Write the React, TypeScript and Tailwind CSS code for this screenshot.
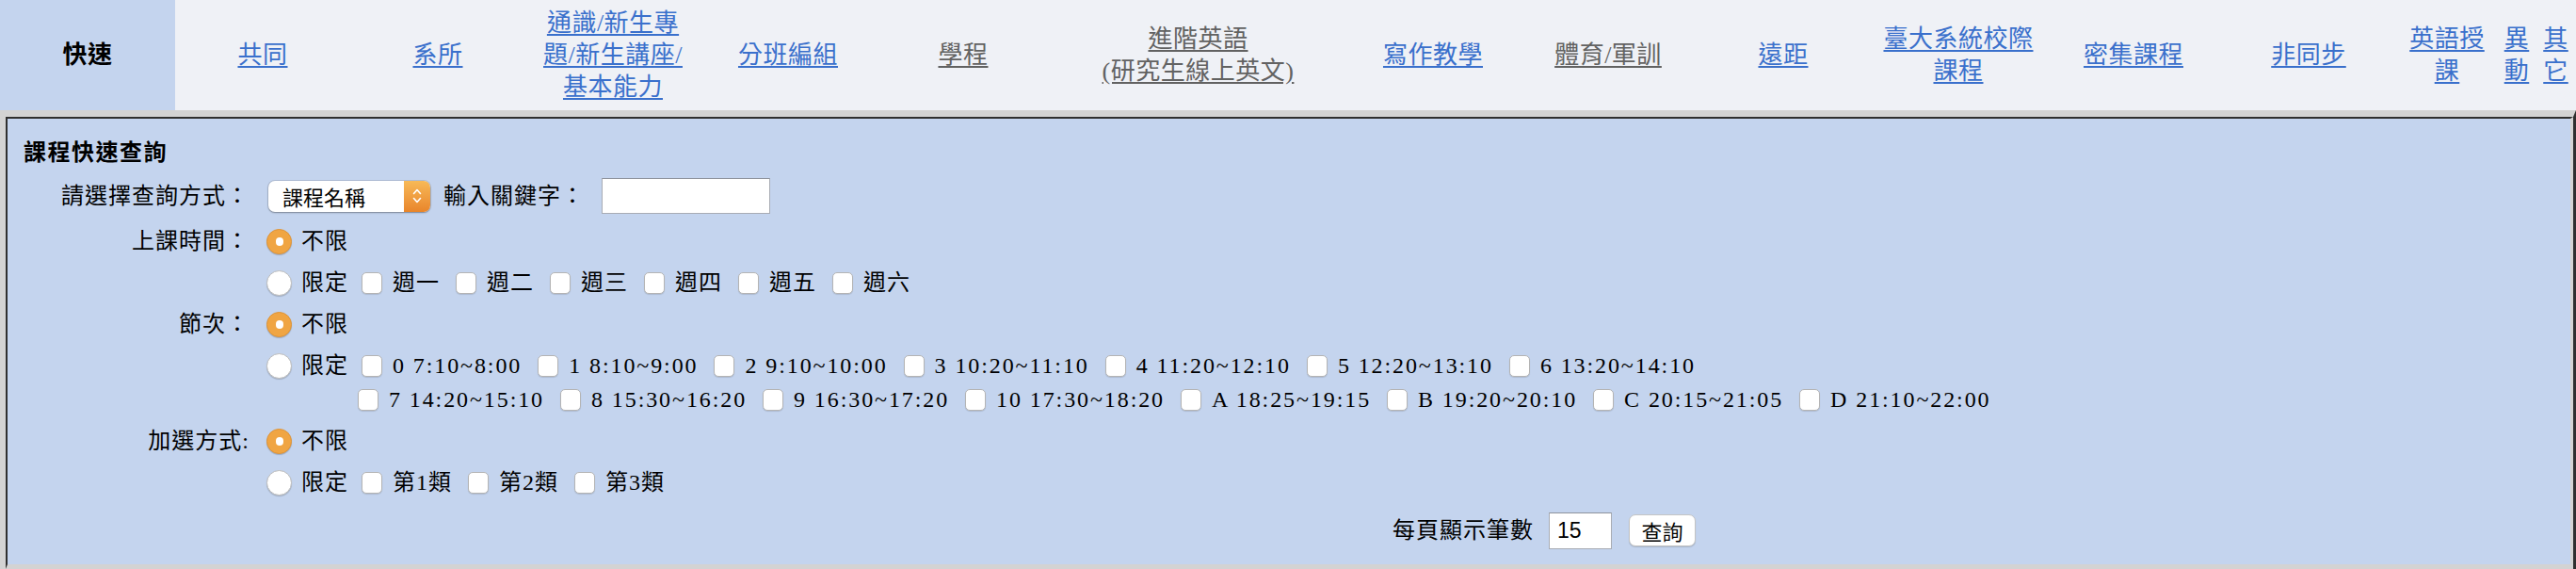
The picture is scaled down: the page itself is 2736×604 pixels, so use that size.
import React from "react";

type Tab = { w: string; lines: string[]; kind: "active" | "link" | "gray" };

const tabs: Tab[] = [
  { w: "w-[186px]", lines: ["快速"], kind: "active" },
  { w: "w-[186px]", lines: ["共同"], kind: "link" },
  { w: "w-[186px]", lines: ["系所"], kind: "link" },
  { w: "w-[186px]", lines: ["通識/新生專", "題/新生講座/", "基本能力"], kind: "link" },
  { w: "w-[186px]", lines: ["分班編組"], kind: "link" },
  { w: "w-[186px]", lines: ["學程"], kind: "gray" },
  { w: "w-[313px]", lines: ["進階英語", "(研究生線上英文)"], kind: "gray" },
  { w: "w-[186px]", lines: ["寫作教學"], kind: "link" },
  { w: "w-[186px]", lines: ["體育/軍訓"], kind: "gray" },
  { w: "w-[186px]", lines: ["遠距"], kind: "link" },
  { w: "w-[186px]", lines: ["臺大系統校際", "課程"], kind: "link" },
  { w: "w-[186px]", lines: ["密集課程"], kind: "link" },
  { w: "w-[186px]", lines: ["非同步"], kind: "link" },
  { w: "w-[108px]", lines: ["英語授", "課"], kind: "link" },
  { w: "w-[40px]", lines: ["異", "動"], kind: "link" },
  { w: "w-[43px]", lines: ["其", "它"], kind: "link" },
];

function TabBar() {
  return (
    <div className="flex h-[117px] bg-[#eff1f6] text-[26px] leading-[34px] tracking-[0.5px]">
      {tabs.map((t, i) => (
        <div
          key={i}
          className={`${t.w} flex shrink-0 items-center justify-center text-center ${
            t.kind === "active" ? "bg-[#c4d4ee]" : ""
          }`}
        >
          {t.kind === "active" ? (
            <span className="font-bold text-black">{t.lines[0]}</span>
          ) : (
            <a
              href="#"
              className={`whitespace-nowrap underline underline-offset-[3px] ${
                t.kind === "gray" ? "text-[#626262]" : "text-[#3a70cc]"
              }`}
            >
              {t.lines.map((l, j) => (
                <React.Fragment key={j}>
                  {j > 0 && <br />}
                  {l}
                </React.Fragment>
              ))}
            </a>
          )}
        </div>
      ))}
    </div>
  );
}

function Radio({ checked }: { checked?: boolean }) {
  return checked ? (
    <span className="flex h-[27px] w-[27px] shrink-0 items-center justify-center rounded-full border border-[#e19434] bg-[#f0a543] shadow-[0_1px_1px_rgba(0,0,0,0.2)]">
      <span className="h-[9px] w-[8px] rounded-full bg-white" />
    </span>
  ) : (
    <span className="h-[27px] w-[27px] shrink-0 rounded-full border border-[#bdbdbd] bg-white shadow-[0_1px_1px_rgba(0,0,0,0.18)]" />
  );
}

function Checkbox() {
  return (
    <span className="h-[23px] w-[22px] shrink-0 rounded-[5px] border border-[#b4b4b4] bg-white shadow-[0_1px_1px_rgba(0,0,0,0.12)]" />
  );
}

function Opt({ label, wide }: { label: string; wide?: boolean }) {
  return (
    <span className="flex items-center gap-[11px]">
      <Checkbox />
      <span className={wide ? "tracking-[1.9px]" : ""}>{label}</span>
    </span>
  );
}

function Row({
  h,
  label,
  children,
}: {
  h: string;
  label?: string;
  children?: React.ReactNode;
}) {
  return (
    <div className={`flex items-center ${h}`}>
      <div className="w-[257px] shrink-0 text-right">{label}</div>
      <div className="ml-[18px] flex items-center">{children}</div>
    </div>
  );
}

function Unlimited() {
  return (
    <div className="flex items-center gap-[10px]">
      <Radio checked />
      <span>不限</span>
    </div>
  );
}

function Limited({ children }: { children?: React.ReactNode }) {
  return (
    <div className="flex items-center">
      <Radio />
      <span className="ml-[10px]">限定</span>
      <div className="ml-[10px] flex items-center gap-[17px] pl-[4px]">{children}</div>
    </div>
  );
}

const periods1 = [
  "0 7:10~8:00",
  "1 8:10~9:00",
  "2 9:10~10:00",
  "3 10:20~11:10",
  "4 11:20~12:10",
  "5 12:20~13:10",
  "6 13:20~14:10",
];
const periods2 = [
  "7 14:20~15:10",
  "8 15:30~16:20",
  "9 16:30~17:20",
  "10 17:30~18:20",
  "A 18:25~19:15",
  "B 19:20~20:10",
  "C 20:15~21:05",
  "D 21:10~22:00",
];

function Chevrons() {
  return (
    <svg width="12" height="20" viewBox="0 0 12 20" fill="none">
      <path d="M2.5 7.5 L6 3.5 L9.5 7.5" stroke="white" strokeWidth="1.6" strokeLinecap="round" strokeLinejoin="round" />
      <path d="M2.5 12.5 L6 16.5 L9.5 12.5" stroke="white" strokeWidth="1.6" strokeLinecap="round" strokeLinejoin="round" />
    </svg>
  );
}

export default function App() {
  return (
    <div className="h-[604px] w-[2736px] overflow-hidden bg-white font-['Liberation_Serif','Noto_Sans_CJK_TC',serif] text-black">
      <TabBar />
      <div className="border-t-[7px] border-r-[3px] border-l-[6px] border-t-[#d3d3d3] border-r-[#2f2f2f] border-l-[#d3d3d3]">
        <div className="flex h-[480px] flex-col border-t-2 border-r-[3px] border-b-[5px] border-l-2 border-t-[#2f2f2f] border-r-[#d3d3d3] border-b-[#d3d3d3] border-l-[#2f2f2f] bg-[#c4d4ee] pt-[15px] text-[24px] tracking-[1px]">
          <div className="flex h-[42px] items-center pl-[17px] font-bold tracking-[1.5px]">課程快速查詢</div>

          <Row h="h-[50px]" label="請選擇查詢方式：">
            <div className="ml-[2px] flex h-[33px] w-[172px] overflow-hidden rounded-[7px] bg-white shadow-[0_0_0_1px_rgba(0,0,0,0.1),0_1px_2px_rgba(0,0,0,0.3)]">
              <div className="flex flex-1 items-center pl-[15px] font-['Noto_Sans_CJK_TC',sans-serif] text-[22px] tracking-normal">
                課程名稱
              </div>
              <div className="flex w-[28px] items-center justify-center bg-linear-to-b from-[#f7b957] to-[#e8852a]">
                <Chevrons />
              </div>
            </div>
            <span className="ml-[14px]">輸入關鍵字：</span>
            <div className="ml-[18px] h-[38px] w-[179px] border border-[#a8acb4] border-t-[#8e939c] bg-white" />
          </Row>

          <Row h="h-[46px]" label="上課時間：">
            <Unlimited />
          </Row>
          <Row h="h-[42px]">
            <Limited>
              {["週一", "週二", "週三", "週四", "週五", "週六"].map((d) => (
                <Opt key={d} label={d} />
              ))}
            </Limited>
          </Row>

          <Row h="h-[46px]" label="節次：">
            <Unlimited />
          </Row>
          <div className="flex h-[78px] flex-col py-[3px]">
            <Row h="h-[36px]">
              <Limited>
                {periods1.map((p) => (
                  <Opt key={p} label={p} wide />
                ))}
              </Limited>
            </Row>
            <Row h="h-[36px]">
              <div className="ml-[97px] flex items-center gap-[17px]">
                {periods2.map((p) => (
                  <Opt key={p} label={p} wide />
                ))}
              </div>
            </Row>
          </div>

          <Row h="h-[46px]" label="加選方式:">
            <Unlimited />
          </Row>
          <Row h="h-[42px]">
            <Limited>
              {["第1類", "第2類", "第3類"].map((d) => (
                <Opt key={d} label={d} />
              ))}
            </Limited>
          </Row>

          <div className="flex h-[60px] items-center pl-[1471px]">
            <span>每頁顯示筆數</span>
            <div className="ml-[16px] flex h-[39px] w-[67px] items-center border border-[#a8acb4] border-t-[#8e939c] bg-white pl-[8px] font-['Liberation_Sans',sans-serif] text-[23px] tracking-normal">
              15
            </div>
            <button className="ml-[18px] flex h-[34px] w-[71px] items-center justify-center rounded-[7px] border border-[#c4c4c4] bg-white font-['Noto_Sans_CJK_TC',sans-serif] text-[22px] tracking-normal shadow-[0_1px_1px_rgba(0,0,0,0.15)]">
              查詢
            </button>
          </div>
        </div>
      </div>
    </div>
  );
}
